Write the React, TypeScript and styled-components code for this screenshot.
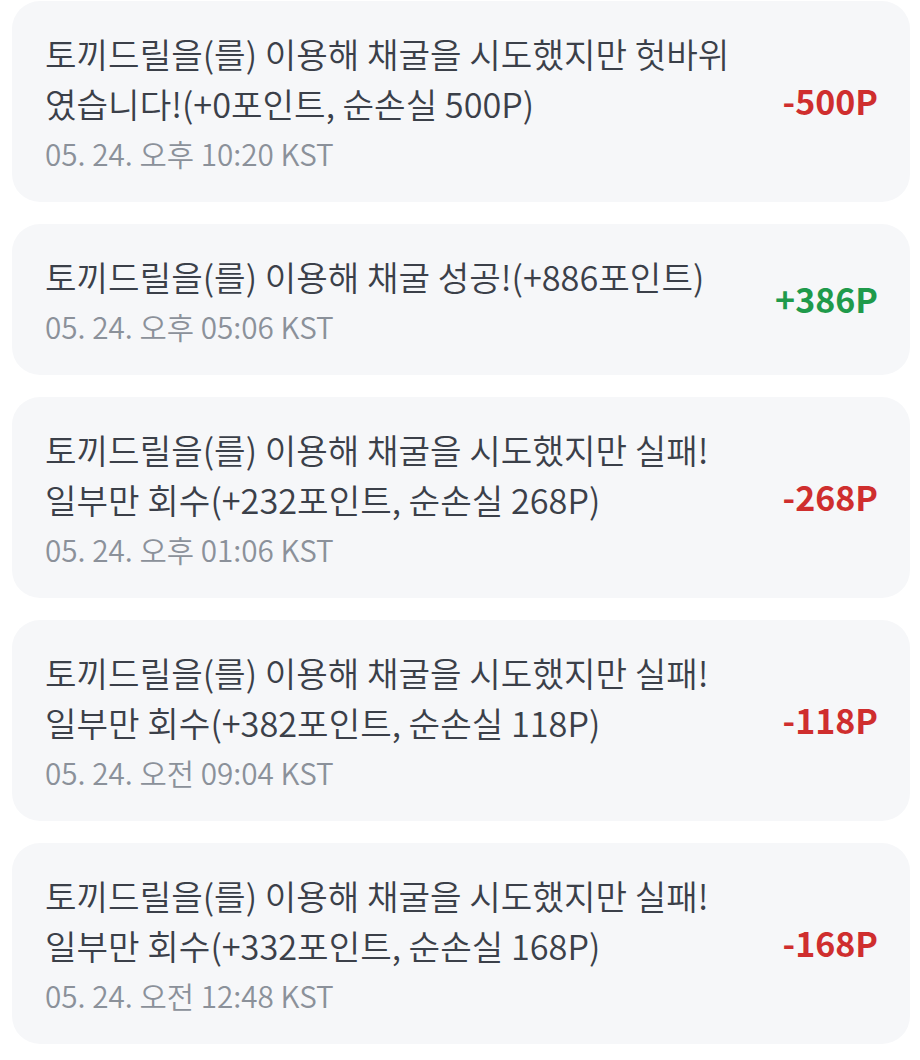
import React from "react";
import styled, { createGlobalStyle } from "styled-components";

type Item = {
  title: string;
  date: string;
  amount: string;
  gain: boolean;
};

const items: Item[] = [
  {
    title: "토끼드릴을(를) 이용해 채굴을 시도했지만 헛바위 였습니다!(+0포인트, 순손실 500P)",
    date: "05. 24. 오후 10:20 KST",
    amount: "-500P",
    gain: false,
  },
  {
    title: "토끼드릴을(를) 이용해 채굴 성공!(+886포인트)",
    date: "05. 24. 오후 05:06 KST",
    amount: "+386P",
    gain: true,
  },
  {
    title: "토끼드릴을(를) 이용해 채굴을 시도했지만 실패! 일부만 회수(+232포인트, 순손실 268P)",
    date: "05. 24. 오후 01:06 KST",
    amount: "-268P",
    gain: false,
  },
  {
    title: "토끼드릴을(를) 이용해 채굴을 시도했지만 실패! 일부만 회수(+382포인트, 순손실 118P)",
    date: "05. 24. 오전 09:04 KST",
    amount: "-118P",
    gain: false,
  },
  {
    title: "토끼드릴을(를) 이용해 채굴을 시도했지만 실패! 일부만 회수(+332포인트, 순손실 168P)",
    date: "05. 24. 오전 12:48 KST",
    amount: "-168P",
    gain: false,
  },
];

const GlobalStyle = createGlobalStyle`
  body {
    margin: 0;
    background: #ffffff;
    font-family: "Noto Sans CJK KR", "Noto Sans", sans-serif;
  }
`;

const App: React.FC = () => {
  return (
    <>
      <GlobalStyle />
      <List>
        {items.map((item, i) => (
          <Card key={i}>
            <Info>
              <Title>{item.title}</Title>
              <DateText>{item.date}</DateText>
            </Info>
            <Amount $gain={item.gain}>{item.amount}</Amount>
          </Card>
        ))}
      </List>
    </>
  );
};

export default App;

const List = styled.div`
  display: flex;
  flex-direction: column;
  gap: 22px;
  padding: 1px 10px 0 12px;
`;

const Card = styled.div`
  display: flex;
  align-items: center;
  justify-content: space-between;
  background-color: #f6f7f9;
  border-radius: 28px;
  padding: 27px 32px 30px 33px;
`;

const Info = styled.div`
  display: flex;
  flex-direction: column;
  max-width: 720px;
`;

const Title = styled.div`
  font-size: 34.3px;
  font-weight: 350;
  line-height: 50px;
  color: #3b4049;
  word-break: keep-all;
`;

const DateText = styled.div`
  margin-top: 8px;
  font-size: 29.7px;
  font-weight: 350;
  line-height: 36px;
  color: #8b919a;
`;

const Amount = styled.div<{ $gain: boolean }>`
  flex-shrink: 0;
  font-size: 34px;
  font-weight: 700;
  color: ${(p) => (p.$gain ? "#1f9a4b" : "#cf2e2e")};
`;
